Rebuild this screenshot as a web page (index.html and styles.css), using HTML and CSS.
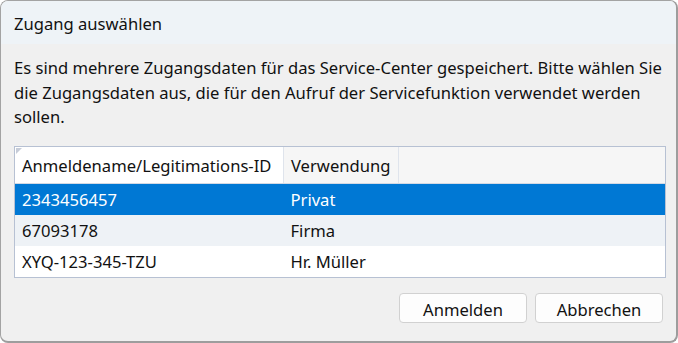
FILE: index.html
```html
<!DOCTYPE html>
<html lang="de">
<head>
  <meta charset="UTF-8" />
  <title>Zugang auswählen</title>
  <link rel="stylesheet" href="styles.css">
</head>
<body>

  <div class="dialog">
    <div class="titlebar">Zugang auswählen</div>

    <div class="content">
      <p class="message">Es sind mehrere Zugangsdaten für das Service-Center gespeichert. Bitte wählen Sie die Zugangsdaten aus, die für den Aufruf der Servicefunktion verwendet werden sollen.</p>

      <div class="grid">
        <span class="corner"></span>
        <table>
          <thead>
            <tr>
              <th class="col-id">Anmeldename/Legitimations-ID</th>
              <th class="col-use">Verwendung</th>
              <th></th>
            </tr>
          </thead>
          <tbody>
            <tr class="selected">
              <td>2343456457</td>
              <td>Privat</td>
              <td></td>
            </tr>
            <tr class="alt">
              <td>67093178</td>
              <td>Firma</td>
              <td></td>
            </tr>
            <tr>
              <td>XYQ-123-345-TZU</td>
              <td>Hr. Müller</td>
              <td></td>
            </tr>
          </tbody>
        </table>
      </div>
    </div>

    <div class="buttons">
      <button class="btn">Anmelden</button>
      <button class="btn">Abbrechen</button>
    </div>
  </div>

</body>
</html>
```

FILE: styles.css
```css
html, body {
  margin: 0;
  padding: 0;
  background: #ffffff;
}

body {
  font-family: 'Noto Sans', 'Open Sans', sans-serif;
  font-size: 16.6px;
  color: #111111;
}

.dialog {
  box-sizing: border-box;
  width: 678px;
  height: 343px;
  display: flex;
  flex-direction: column;
  background: #f0f0f0;
  border: 1px solid #a3a3a3;
  border-right: 2px solid #9d9d9d;
  border-bottom: 2px solid #9d9d9d;
  border-radius: 8px;
  overflow: hidden;
}

.titlebar {
  height: 43px;
  display: flex;
  align-items: center;
  padding: 1px 0 0 13px;
  box-sizing: border-box;
  background: #eef3f7;
  flex-shrink: 0;
}

.content {
  padding: 0 12px 0 13px;
}

.message {
  margin: 12px 0 0;
  line-height: 24.5px;
}

/* list view */
.grid {
  position: relative;
  margin-top: 16px;
  width: 650px;
  border: 1px solid #b7c1d3;
  background: #ffffff;
}

.corner {
  position: absolute;
  top: 1px;
  left: 1px;
  width: 0;
  height: 0;
  border-top: 6px solid #c6ccd8;
  border-right: 6px solid transparent;
}

table {
  width: 100%;
  border-collapse: collapse;
  table-layout: fixed;
}

th, td {
  text-align: left;
  font-weight: normal;
  padding: 1px 0 0 7px;
  white-space: nowrap;
}

th {
  height: 35px;
  background: #f6f6f6;
  border-right: 1px solid #dfe4ec;
  border-bottom: 1px solid #d3d9e4;
}

th.col-id {
  width: 261px;
  background: #ffffff;
}

th.col-use {
  width: 107px;
}

th:last-child {
  border-right: none;
}

td {
  height: 30px;
}

tr.selected td {
  background: #0078d4;
  color: #ffffff;
}

tr.alt td {
  background: #eef2f6;
}

.buttons {
  margin-top: auto;
  display: flex;
  justify-content: flex-end;
  gap: 8px;
  padding: 0 13px 18px 0;
}

.btn {
  width: 128px;
  height: 30px;
  font-family: 'Noto Sans', 'Open Sans', sans-serif;
  font-size: 16.6px;
  color: #111111;
  background: #fdfdfd;
  border: 1px solid #d1d1d1;
  border-radius: 4px;
  padding: 3px 0 0;
}
```
